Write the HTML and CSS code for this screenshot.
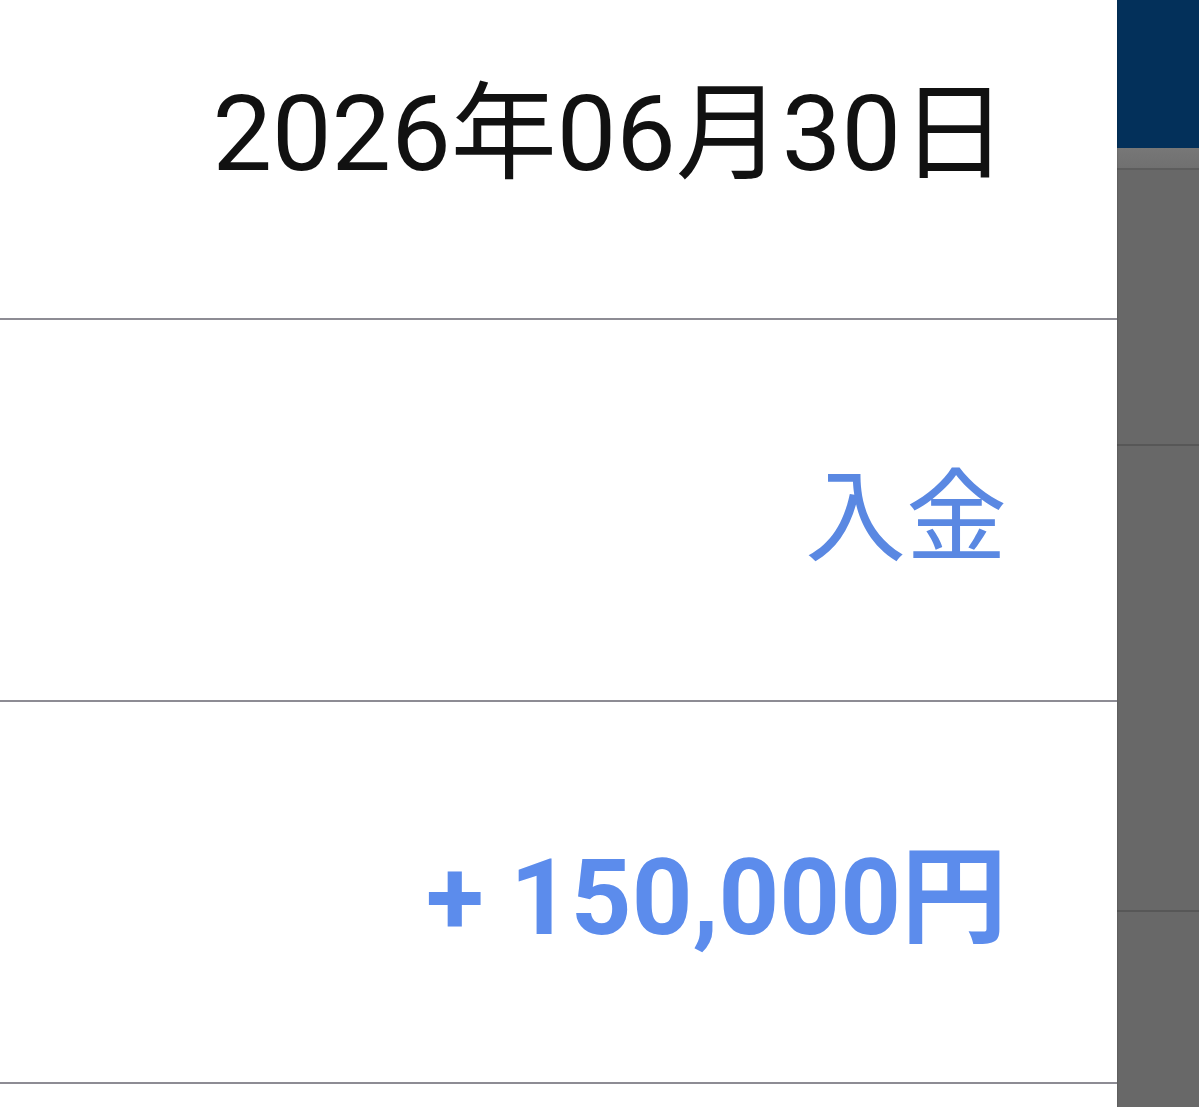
FILE: index.html
```html
<!DOCTYPE html>
<html lang="ja">
<head>
<meta charset="utf-8">
<title>入金詳細</title>
<link rel="stylesheet" href="styles.css">
</head>
<body>
<div class="screen">
  <main class="sheet">
    <div class="rows">
      <div class="row">
        <span class="date">2026年06月30日</span>
      </div>
      <div class="row">
        <span class="kind">入金</span>
      </div>
      <div class="row">
        <span class="amount">+ 150,000円</span>
      </div>
      <div class="row"></div>
    </div>
  </main>
  <aside class="backdrop">
    <div class="backdrop-header"></div>
    <div class="backdrop-tab"></div>
    <div class="backdrop-item first"></div>
    <div class="backdrop-item second"></div>
    <div class="backdrop-item"></div>
  </aside>
</div>
</body>
</html>
```

FILE: styles.css
```css
html, body {
  margin: 0;
  padding: 0;
  height: 100%;
  overflow: hidden;
  background: #ffffff;
}

.screen {
  display: grid;
  grid-template-columns: 1117px 1fr;
  height: 1107px;
  font-family: Roboto, "Noto Sans CJK JP", sans-serif;
}

/* white detail sheet */
.sheet {
  background: #ffffff;
  overflow: hidden;
  box-shadow: 1px 0 1px rgba(0, 0, 0, 0.08);
  position: relative;
  z-index: 1;
}

.rows {
  margin-top: -62px;
}

.row {
  height: 380px;
  border-bottom: 2px solid #8d8c94;
  display: flex;
  align-items: center;
  justify-content: flex-end;
  padding-right: 110px;
}

.date {
  font-size: 106px;
  font-weight: 400;
  color: #111111;
  margin-top: -8px;
  margin-right: 0;
}

.kind {
  font-size: 101px;
  font-weight: 400;
  color: #5a88e2;
  margin-top: -2px;
}

.amount {
  font-size: 106px;
  font-weight: 700;
  color: #5c8cec;
  margin-top: -8px;
}

/* dimmed list behind the sheet */
.backdrop {
  background: #686868;
  display: flex;
  flex-direction: column;
}

.backdrop-header {
  height: 148px;
  background: #03305a;
}

.backdrop-tab {
  height: 20px;
  background: linear-gradient(#777777, #707070);
  border-bottom: 2px solid #5d5d5d;
}

.backdrop-item {
  border-bottom: 2px solid #575757;
}

.backdrop-item.first {
  height: 274px;
}

.backdrop-item.second {
  height: 464px;
}

.backdrop-item:last-child {
  border-bottom: none;
  flex: 1;
}
```
